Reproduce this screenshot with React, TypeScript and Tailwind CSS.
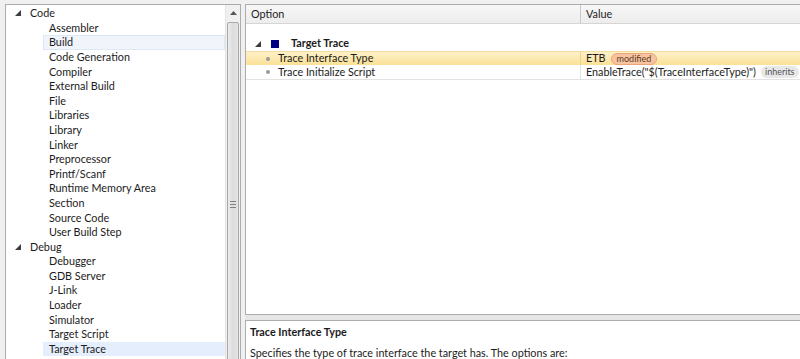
import React from 'react'

const font = { fontFamily: 'Lato, "Noto Sans", sans-serif' }

type Group = { name: string; items: string[] }

const groups: Group[] = [
  {
    name: 'Code',
    items: [
      'Assembler',
      'Build',
      'Code Generation',
      'Compiler',
      'External Build',
      'File',
      'Libraries',
      'Library',
      'Linker',
      'Preprocessor',
      'Printf/Scanf',
      'Runtime Memory Area',
      'Section',
      'Source Code',
      'User Build Step',
    ],
  },
  {
    name: 'Debug',
    items: ['Debugger', 'GDB Server', 'J-Link', 'Loader', 'Simulator', 'Target Script', 'Target Trace'],
  },
]

function Expander() {
  return (
    <svg width="6" height="6" viewBox="0 0 6 6" className="shrink-0">
      <polygon points="6,0 6,6 0,6" fill="#3c3c3c" />
    </svg>
  )
}

function TreeItem({ label }: { label: string }) {
  const hover = label === 'Build'
  const selected = label === 'Target Trace'
  return (
    <div className="h-[14.6px] flex items-center pl-[37px]">
      <div
        className={
          'h-full flex-1 flex items-center pl-[5px] border ' +
          (selected
            ? 'bg-[#e5eefc] border-[#e5eefc]'
            : hover
              ? 'bg-[#f1f5fb] border-[#dde8f6]'
              : 'border-transparent')
        }
      >
        {label}
      </div>
    </div>
  )
}

function Scrollbar() {
  return (
    <div className="w-[15px] shrink-0 flex flex-col bg-[#f0f0f0] border-l border-[#e4e4e4]">
      <div className="h-[16px] flex items-center justify-center">
        <svg width="7" height="4" viewBox="0 0 7 4">
          <polygon points="3.5,0 7,4 0,4" fill="#555" />
        </svg>
      </div>
      <div className="flex-1 mx-[1px] mt-[1px] rounded-[2px] border border-[#a9a9a9] bg-gradient-to-r from-[#ececec] via-[#dcdcdc] to-[#e4e4e4] flex flex-col items-center">
        <div className="mt-[178px] flex flex-col gap-[2px]">
          <div className="w-[6px] h-[1px] bg-[#808080]" />
          <div className="w-[6px] h-[1px] bg-[#808080]" />
          <div className="w-[6px] h-[1px] bg-[#808080]" />
        </div>
      </div>
    </div>
  )
}

function Bullet() {
  return <div className="w-[4px] h-[4px] rounded-full bg-[#9a9a9a] ml-[20px] mr-[8px] shrink-0" />
}

export default function App() {
  return (
    <div
      className="w-[800px] h-[359px] overflow-hidden bg-[#f0f0f0] flex pt-[4px] pl-[5px] gap-[4px] text-[10.8px] text-[#1b1b1b]"
      style={font}
    >
      <div className="w-[236px] h-[400px] shrink-0 flex border border-[#acacac] bg-white">
        <div className="flex-1 pt-[1px]">
          {groups.map((g) => (
            <div key={g.name}>
              <div className="h-[14.6px] flex items-center pl-[9px]">
                <Expander />
                <span className="ml-[9px]">{g.name}</span>
              </div>
              {g.items.map((it) => (
                <TreeItem key={it} label={it} />
              ))}
            </div>
          ))}
        </div>
        <Scrollbar />
      </div>

      <div className="flex-1 flex flex-col">
        <div className="h-[311px] shrink-0 border border-r-0 border-[#acacac] bg-white flex flex-col">
          <div className="h-[19px] flex bg-gradient-to-b from-[#f7f7f7] to-[#ededed] border-b border-[#d5d5d5]">
            <div className="w-[335px] pl-[5px] flex items-center border-r border-[#c8c8c8]">Option</div>
            <div className="flex-1 pl-[5px] flex items-center">Value</div>
          </div>
          <div className="h-[12px]" />
          <div className="h-[15px] flex items-center pl-[9px]">
            <Expander />
            <div className="w-[8px] h-[8px] bg-[#000080] ml-[10px]" />
            <span className="ml-[12px] font-bold">Target Trace</span>
          </div>
          <div className="h-[14px] flex bg-gradient-to-b from-[#fdf1c8] to-[#fbe196] border-t border-[#f3dc9c]">
            <div className="w-[335px] flex items-center border-r border-[#e9d39a]">
              <Bullet />
              Trace Interface Type
            </div>
            <div className="flex-1 flex items-center pl-[5px] whitespace-nowrap">
              ETB
              <span className="ml-[5px] h-[12px] px-[5px] shrink-0 flex items-center rounded-full bg-[#f7c3a0] border border-[#eba57c] text-[9px] text-[#5b3b25]">
                modified
              </span>
            </div>
          </div>
          <div className="h-[15px] flex border-b border-[#e2e2e2]">
            <div className="w-[335px] flex items-center border-r border-[#e2e2e2]">
              <Bullet />
              Trace Initialize Script
            </div>
            <div className="flex-1 flex items-center pl-[5px] whitespace-nowrap">
              EnableTrace("$(TraceInterfaceType)")
              <span className="ml-[5px] h-[12px] px-[4px] shrink-0 flex items-center rounded-full bg-[#e8e8e8] text-[9px] text-[#555]">
                inherits
              </span>
            </div>
          </div>
        </div>
        <div className="h-[5px] shrink-0 bg-[#e6e6e6]" />
        <div className="flex-1 border-l border-t border-[#acacac] bg-white pl-[4px] pt-[4px]">
          <div className="font-bold h-[15px] flex items-center">Trace Interface Type</div>
          <div className="mt-[6px] h-[15px] flex items-center">
            Specifies the type of trace interface the target has. The options are:
          </div>
        </div>
      </div>
    </div>
  )
}
